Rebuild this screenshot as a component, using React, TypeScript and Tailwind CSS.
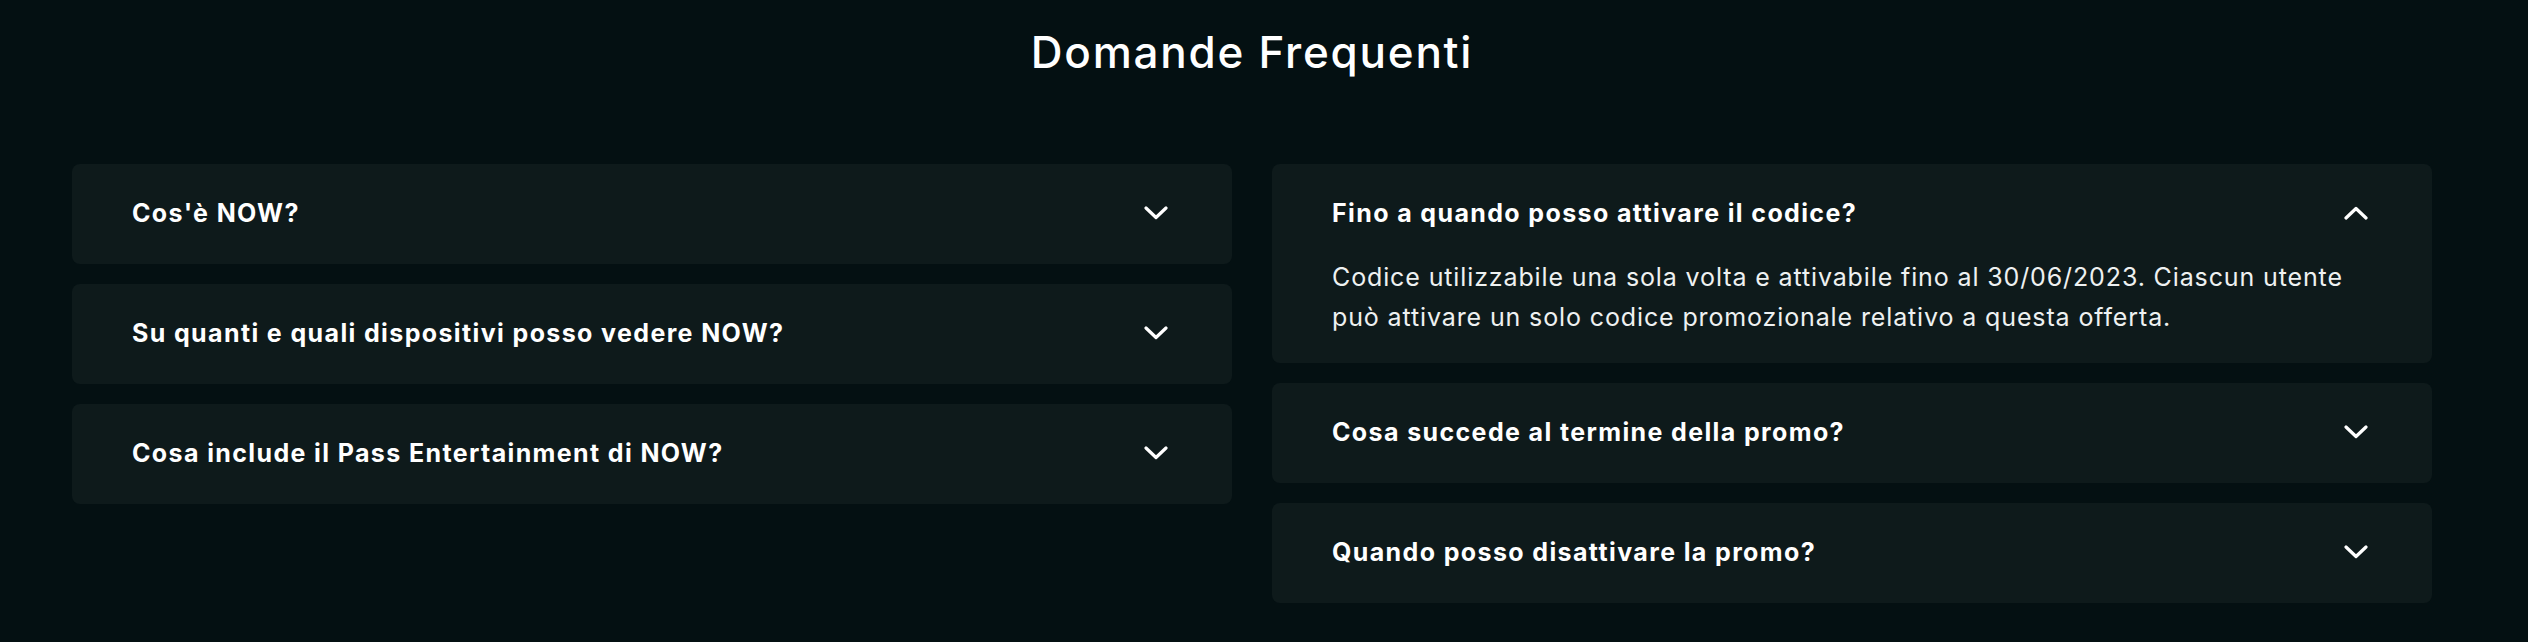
import React, { useState } from 'react';

type Faq = { q: string; a?: string };

const LEFT: Faq[] = [
  { q: "Cos'è NOW?" },
  { q: 'Su quanti e quali dispositivi posso vedere NOW?' },
  { q: 'Cosa include il Pass Entertainment di NOW?' },
];

const RIGHT: Faq[] = [
  {
    q: 'Fino a quando posso attivare il codice?',
    a: 'Codice utilizzabile una sola volta e attivabile fino al 30/06/2023. Ciascun utente può attivare un solo codice promozionale relativo a questa offerta.',
  },
  { q: 'Cosa succede al termine della promo?' },
  { q: 'Quando posso disattivare la promo?' },
];

const Chevron: React.FC<{ up?: boolean }> = ({ up }) => (
  <svg
    width="24"
    height="14"
    viewBox="0 0 24 14"
    fill="none"
    className={`shrink-0 mr-1 ${up ? 'rotate-180' : ''}`}
  >
    <path d="M2 2L12 11.5L22 2" stroke="white" strokeWidth="3.2" strokeLinecap="round" strokeLinejoin="round" />
  </svg>
);

const FaqItem: React.FC<{ item: Faq; open: boolean; onToggle: () => void }> = ({ item, open, onToggle }) => (
  <div className="rounded-lg bg-[#0e1a1b] px-[60px]">
    <button
      onClick={onToggle}
      className="w-full flex items-center justify-between pt-[29px] pb-[31px] text-left cursor-pointer"
    >
      <span className="text-[25px] leading-[40px] font-bold tracking-[0.055em] text-white">{item.q}</span>
      <Chevron up={open} />
    </button>
    {open && item.a && (
      <p className="-mt-[7px] pb-[26px] text-[25px] leading-[40px] tracking-[0.035em] text-[#eef1f1]">{item.a}</p>
    )}
  </div>
);

export default function App() {
  const [open, setOpen] = useState<string | null>(RIGHT[0].q);
  const toggle = (q: string) => setOpen(o => (o === q ? null : q));

  return (
    <div
      className="min-h-[642px] bg-[#041012] pl-[72px] pr-[96px] pt-[26px]"
      style={{ fontFamily: 'Inter, "Noto Sans", sans-serif' }}
    >
      <h2 className="text-center text-[44px] leading-[53px] font-medium tracking-[0.04em] text-white">
        Domande Frequenti
      </h2>
      <div className="mt-[85px] grid grid-cols-2 gap-x-10 items-start">
        <div className="flex flex-col gap-5">
          {LEFT.map(f => (
            <FaqItem key={f.q} item={f} open={open === f.q} onToggle={() => toggle(f.q)} />
          ))}
        </div>
        <div className="flex flex-col gap-5">
          {RIGHT.map(f => (
            <FaqItem key={f.q} item={f} open={open === f.q} onToggle={() => toggle(f.q)} />
          ))}
        </div>
      </div>
    </div>
  );
}
